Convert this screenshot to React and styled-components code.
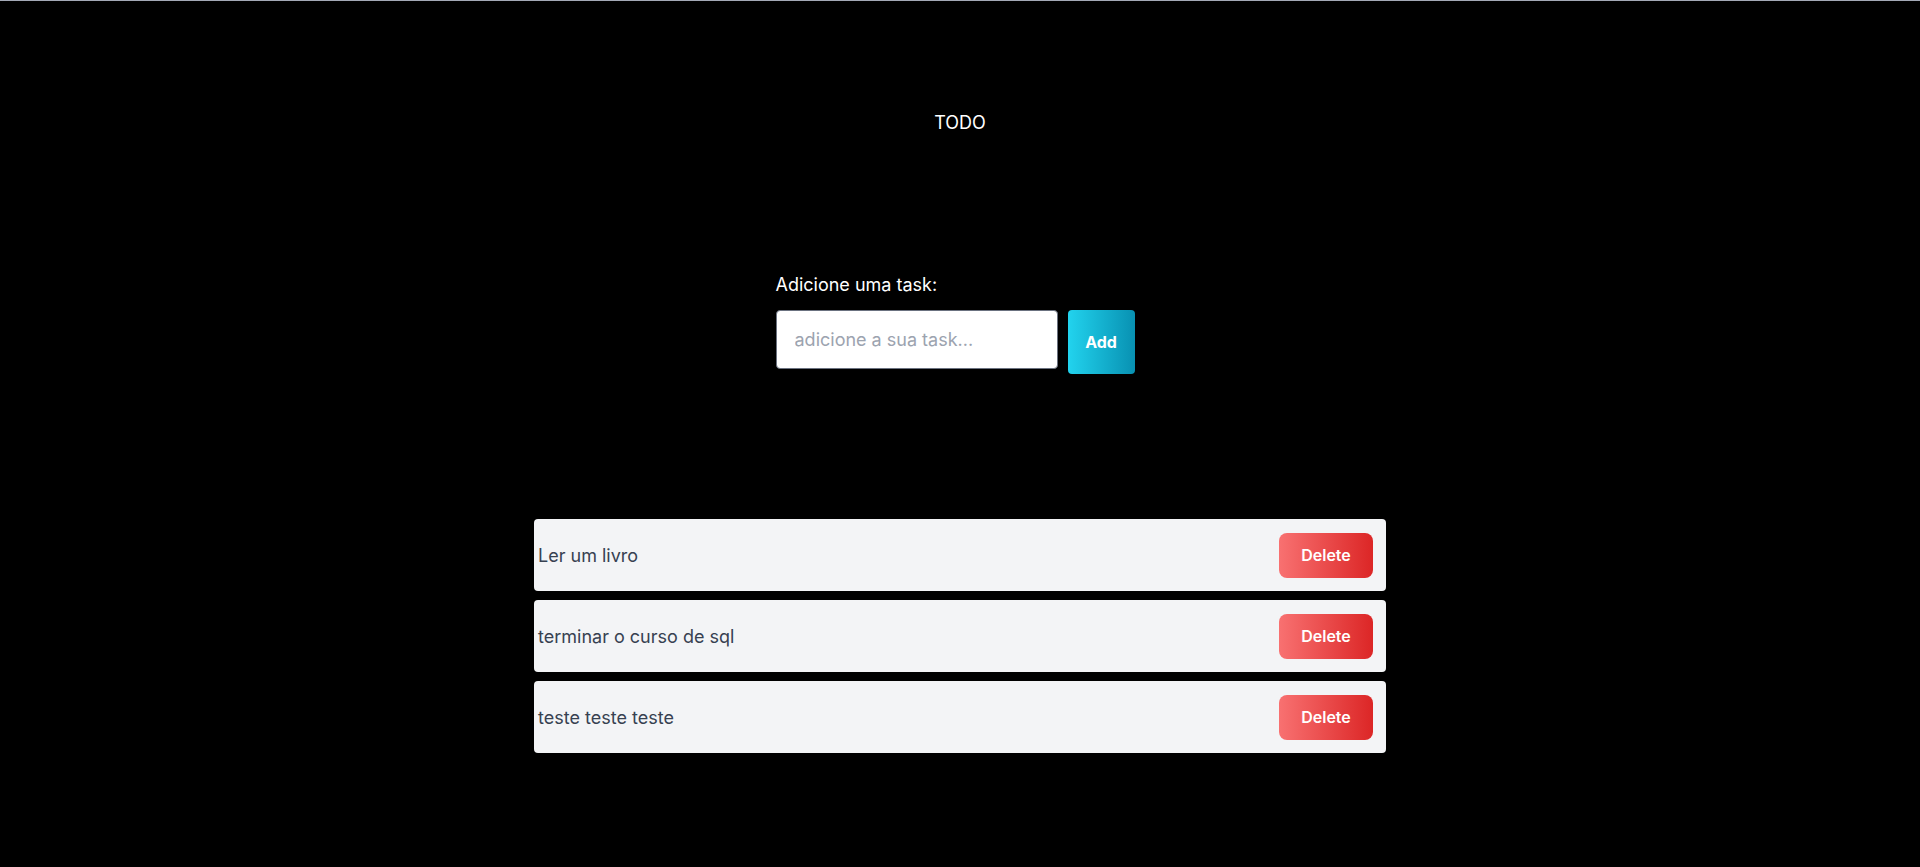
import {useState} from "react";
import styled, {createGlobalStyle} from "styled-components";

const GlobalStyle = createGlobalStyle`
  html, body {
    margin: 0;
    padding: 0;
    background: #000;
  }

  * {
    box-sizing: border-box;
  }
`

const initialTasks = [
    {id: 1, text: "Ler um livro"},
    {id: 2, text: "terminar o curso de sql"},
    {id: 3, text: "teste teste teste"},
];

const App = () => {
    const [tasks, setTasks] = useState(initialTasks);
    const [value, setValue] = useState("");

    const handleAdd = () => {
        if (!value.trim()) return;
        setTasks([...tasks, {id: Date.now(), text: value}]);
        setValue("");
    }

    const handleDelete = (id) => setTasks(tasks.filter(t => t.id !== id));

    return <>
        <GlobalStyle/>
        <Page>
            <Title>TODO</Title>
            <Form>
                <Label htmlFor="task">Adicione uma task:</Label>
                <Row>
                    <Input id="task" placeholder="adicione a sua task..." value={value}
                           onChange={e => setValue(e.target.value)}/>
                    <AddButton onClick={handleAdd}>Add</AddButton>
                </Row>
            </Form>
            <List>
                {tasks.map(task => (
                    <Item key={task.id}>
                        <ItemText>{task.text}</ItemText>
                        <DeleteButton onClick={() => handleDelete(task.id)}>Delete</DeleteButton>
                    </Item>
                ))}
            </List>
        </Page>
    </>;
}

const Page = styled.div`
  min-height: 100vh;
  background: #000;
  border-top: 1px solid #a4a9b6;
  display: flex;
  flex-direction: column;
  align-items: center;
  font-family: Inter, "Noto Sans", sans-serif;
  padding-bottom: 40px;
`

const Title = styled.h1`
  margin: 111px 0 0;
  font-size: 18px;
  line-height: 22px;
  font-weight: 400;
  color: #fff;
`

const Form = styled.div`
  margin-top: 140px;
  display: flex;
  flex-direction: column;
  padding-right: 10px;
`

const Label = styled.label`
  font-size: 18px;
  line-height: 22px;
  color: #fff;
  margin-bottom: 14px;
`

const Row = styled.div`
  display: flex;
  align-items: flex-start;
  gap: 10px;
`

const Input = styled.input`
  width: 282px;
  height: 59px;
  border: 1px solid #6b7280;
  border-radius: 4px;
  padding: 0 18px;
  font-family: inherit;
  font-size: 18px;
  color: #111827;
  background: #fff;
  outline: none;

  &::placeholder {
    color: #9ca3af;
  }
`

const AddButton = styled.button`
  width: 67px;
  height: 64px;
  border: none;
  border-radius: 4px;
  background: linear-gradient(to right, #22d3ee, #0891b2);
  color: #fff;
  font-family: inherit;
  font-size: 16px;
  font-weight: 700;
  cursor: pointer;
`

const List = styled.ul`
  list-style: none;
  margin: 145px 0 0;
  padding: 0;
  width: 852px;
  display: flex;
  flex-direction: column;
  gap: 9px;
`

const Item = styled.li`
  height: 72px;
  background: #f3f4f6;
  border-radius: 4px;
  display: flex;
  align-items: center;
  justify-content: space-between;
  padding: 0 13px 0 4px;
`

const ItemText = styled.span`
  font-size: 18px;
  color: #374151;
`

const DeleteButton = styled.button`
  width: 94px;
  height: 45px;
  border: none;
  border-radius: 8px;
  background: linear-gradient(to right, #f87171, #dc2626);
  color: #fff;
  font-family: inherit;
  font-size: 16px;
  font-weight: 600;
  cursor: pointer;
`

export default App
